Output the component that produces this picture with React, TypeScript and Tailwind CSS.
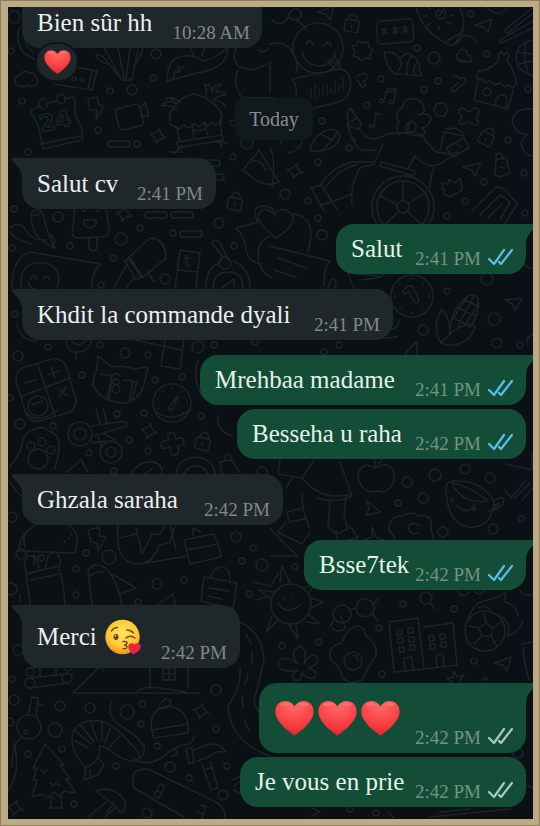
import React from "react";

type Side = "in" | "out";

const RINGS: [number, number, number][] = [
  [14, 17, 6], [11, 51, 3], [156, 54, 5], [153, 78, 3], [110, 91, 3], [132, 90, 5], [22, 101, 3], [98, 130, 3], [137, 144, 3], [28, 152, 3], [233, 157, 3], [233, 123, 3],
  [434, 58, 6], [417, 48, 3], [471, 14, 3], [487, 54, 3], [438, 81, 3], [424, 90, 3], [381, 79, 3], [367, 105, 3], [322, 121, 3], [508, 140, 3], [528, 89, 3], [318, 162, 3], [349, 148, 3], [285, 194, 5], [308, 201, 3], [484, 182, 3], [465, 201, 3], [524, 173, 3], [247, 143, 6],
  [14, 209, 3], [58, 217, 5], [70, 246, 3], [12, 248, 3], [121, 239, 6], [140, 228, 3], [113, 258, 3], [165, 279, 5], [173, 233, 3], [219, 223, 5], [234, 246, 3], [101, 285, 3], [15, 314, 3], [48, 347, 3], [18, 356, 5], [100, 345, 3], [125, 353, 5], [148, 355, 3], [198, 347, 6], [214, 345, 3], [255, 342, 3], [82, 375, 3], [155, 380, 3], [182, 377, 3], [10, 398, 3],
  [318, 218, 3], [322, 235, 5], [447, 216, 3], [525, 213, 3], [487, 279, 6], [447, 291, 3], [494, 319, 6], [423, 330, 5], [497, 343, 5], [520, 345, 3], [339, 345, 3], [324, 352, 3],
  [20, 424, 5], [53, 426, 3], [117, 414, 3], [144, 413, 3], [201, 416, 3], [129, 440, 3], [148, 451, 3], [89, 453, 3], [114, 471, 3], [12, 517, 5], [21, 554, 5], [41, 558, 3], [86, 553, 3], [109, 557, 7], [76, 569, 3], [236, 537, 5], [253, 548, 3], [242, 561, 3], [262, 565, 6], [157, 584, 5], [184, 580, 3], [76, 595, 3], [249, 594, 3], [138, 602, 3], [11, 589, 6], [262, 472, 5],
  [407, 482, 5], [435, 475, 6], [465, 469, 5], [490, 478, 5], [423, 498, 5], [398, 503, 3], [443, 532, 5], [493, 529, 5], [521, 519, 3], [295, 567, 3], [403, 604, 3], [454, 609, 3],
  [18, 650, 5], [12, 679, 3], [14, 700, 5], [60, 706, 5], [90, 708, 5], [127, 712, 7], [142, 704, 3], [141, 724, 3], [55, 730, 7], [216, 690, 5], [216, 729, 3], [157, 746, 3], [62, 749, 3], [28, 754, 3], [116, 766, 3], [170, 767, 5], [189, 778, 3], [227, 766, 3], [223, 795, 5], [74, 804, 3], [147, 813, 5], [10, 722, 4],
  [379, 628, 3], [282, 646, 3], [319, 642, 3], [382, 674, 3], [474, 661, 3], [518, 753, 5], [376, 813, 3], [350, 809, 3],
];

const SPARKS: [number, number][] = [[158, 136], [295, 171], [124, 214], [149, 431], [201, 711], [15, 808]];
const ARROWS: [number, number, number][] = [[484, 25, 0], [472, 168, 5], [513, 302, 15], [371, 508, 60], [503, 663, 0], [326, 12, 0]];
const LOCKS: [number, number, number][] = [[352, 24, 8], [487, 137, 30], [203, 442, 15], [235, 202, 10]];
const BARS: [number, number, number][] = [[108, 141, 22], [145, 212, 22], [171, 212, 22], [180, 231, 22], [206, 160, 14], [206, 174, 18]];

function Doodles() {
  return (
    <svg
      aria-hidden="true"
      className="absolute inset-0 h-full w-full text-[#1d2428]"
      viewBox="8 7 525 812"
      preserveAspectRatio="xMidYMid slice"
      fill="none"
      stroke="currentColor"
      strokeWidth="1.5"
      strokeLinecap="round"
      strokeLinejoin="round"
    >
      {RINGS.map(([x, y, r]) => <circle key={`${x}-${y}`} cx={x} cy={y} r={r} />)}
      {SPARKS.map(([x, y]) => <path key={`${x}-${y}`} transform={`translate(${x} ${y}) rotate(12)`} d="M0-8Q1-2 8 0Q1 2 0 8Q-1 2-8 0Q-1-2 0-8z" />)}
      {ARROWS.map(([x, y, a]) => <path key={`${x}-${y}`} transform={`translate(${x} ${y}) rotate(${a})`} d="M-9 0L8-6L4 8L0 2z" />)}
      {LOCKS.map(([x, y, a]) => (
        <g key={`${x}-${y}`} transform={`translate(${x} ${y}) rotate(${a})`}>
          <rect x="-7" y="-4" width="14" height="12" rx="2" />
          <path d="M-4-4v-3q4-6 8 0v3M0 1v3" />
        </g>
      ))}
      {BARS.map(([x, y, w]) => <rect key={`${x}-${y}`} x={x} y={y} width={w} height="6" rx="2.5" />)}

      {/* banana, cloud, banknote, tulips and fox tail */}
      <path d="M20 27q-6 14 4 26l12 7M25 30q-3 12 8 23" />
      <path d="M16 84q-4-8 4-9q3-6 9-2q7-1 6 4q5 3 1 8q-4 3-8 0q-7 4-12-1z" />
      <path d="M54 84l38 6 5-19-22-4M88 89l4-18" /><circle cx="74" cy="79" r="2" /><circle cx="82" cy="80" r="2" />
      <path d="M96 55q6-2 14 10l12 15h10l6-30M104 48l18 32M118 48l6 30M130 48l-4 31M143 48q-4 14-10 18M96 55q1 6 12 9" />
      <path d="M167 81q0-20 12-24q12-4 24 4q12-2 24-13M167 81l30-8q30-4 31-25M174 78v-6h6l-2-5h6M190 48l4 8M205 48l-3 8" />
      <path d="M236 48q-4 10 2 18q14 8 28-2M238 70q-6 14 4 28h34M258 50q8 4 10-2" />

      {/* calendar, lightning, camcorder */}
      <path d="M42 106l-9 3q-3 2-1 6q4 4 6 11M49 103l8-2M65 99l6-2q4 0 4 5v9q0 6 5 13q4 8 2 16l-39 9q-2-8-4-22M40 144l41-8" />
      <ellipse cx="43" cy="104" rx="4" ry="5" /><ellipse cx="61" cy="99" rx="4" ry="5" />
      <text x="41" y="132" transform="rotate(-12 41 132)" className="text-[23px] font-bold" fontFamily="DejaVu Sans, sans-serif" strokeWidth="1.2">24</text>
      <path d="M88 99l9-2 2 8 5 1-8 14 1-10-7 0z" />
      <rect x="117" y="106" width="25" height="22" rx="4" transform="rotate(-14 130 117)" /><path d="M140 109l5-7 4 15-8-2" />

      {/* beach hut */}
      <path d="M170 124q-2-10 4-16q6-12 20-14q14 3 22 12q8 8 5 15l-5 4-4-3-4 4-5-3-4 4-5-3-5 4-5-3-5 4zM176 126l4 16M220 120l2 16M177 142l45-7 1 5-45 8zM192 124l2 14M205 122l2 13M193 131l13-2M175 153l7-8M170 152h12M216 142l12 1M220 140l2 8" />
      <path d="M176 110q-6-6-14-4q6-8 14-2q-4-8-10-5q8-4 14 4M170 120q-2-8 2-10M206 97q2-10-2-12q8-2 8 7q2-8 9-8q-4 4-5 9q6-4 10 2q-8 0-13 5q8 0 12 6" />

      {/* smiley, voice bubble, keypad */}
      <circle cx="318" cy="48" r="25" />
      <path d="M306 45q3-8 7 0M324 46q5-8 7 0M302 51q2 14 18 15q12-1 16-15M329 61l5 8q5 1 6-4l-5-8M332 60l4 5" />
      <path d="M270 44q16-4 22 8q8 12 4 20M272 20q8 8 16-2q2-10 10-9q7 6 0 10q-8 2-10-4M296 20q8 4 10 10M270 92v-30" />
      <path d="M292 79l48-10q10 2 11 16q-2 14-12 17l-42 10M292 79q6 8 4 17" />
      <path strokeWidth="1.2" d="M307 90v5M311 88v10M315 85v13M319 89v6M323 86v9M327 84v12M331 87v6M335 80v14M339 84v8M343 78v12" />
      <rect x="377" y="20" width="36" height="23" rx="4" transform="rotate(-5 395 31)" />
      <path d="M382 29l5 5M382 34l5-5M384 28v7M393 28l5 5M393 33l5-5M395 27v7M403 27l5 5M403 32l5-5M405 26v7" />
      <path d="M352 46l5-1 1-4 5 2 5-1 1 5 4 3-3 5 0 4-5-1-4 3-3-4-5-1 2-5zM384 52q14-1 18 12q-4 8-6 11q-10-8-12-23zM401 58q6-8 11-2q5 0 5 6q4 1 2 6l3 8-24-2M412 56q-7 6-5 18M418 62q-6 6-4 12" />

      {/* hot air balloon, chopsticks, basketball */}
      <path d="M416 7q6 26 36 39q10-8 12-24q-2-8-4-15M447 41l17-10M452 46q8-4 12-12M464 36q8-2 12 6M439 15q4-2 3-4q-5-3-6 3q1 7 8 4q4-7-2-11M430 9l-3-2M427 16h-4M430 23l-3 3M439 26v3M447 22l3 2M450 15h4" />
      <path d="M486 7q8 8 16 6l6-6M505 30l27-22M508 33l24-19M500 40l33-19M501 43l32-15M505 30q0 3 3 3M500 40q-1 2 1 3" />
      <path d="M533 40q-16 3-17 17q0 14 17 19M517 52l16 2M518 64l15-3M526 43q-4 15 2 30" />

      {/* hermit house */}
      <path d="M477 79q-2-4 2-8q14-2 20-12q-2-5 2-7l3 3 3-3q4 3 0 8q10 16 9 24l-3 4-4-3-4 2-5-4-5 2-5-4-5 1-4-3zM478 81l-4 19 34 9 5-19M496 105v-6q6-8 11-1l-1 11" /><circle cx="487" cy="92" r="4" />

      {/* notes, cane, candy, poop */}
      <path d="M384 100l3-11h9l-2 12M384 100q-5-2-5 2q5 2 5-2M394 101q-5-2-5 2q5 2 5-2M387 92h8M374 126l2-13 5 2M374 126q-5-3-5 1q5 2 5-1" />
      <path d="M356 77q4-4 10-3q3 6-3 7l3 5-4 1-5-7M453 77q3-4 6 2q5-4 7 2l-12 11-3-3 8-7M458 60q-4-5 1-7l2-4q7 1 6 6q7 2 4 7zM458 60q7 4 13 1" />
      <polygon points="436,104 444,103 448,110 444,116 437,116 434,110" />
      <path d="M459 110q3-4 7 0q4 3 7-1q4-3 6 1q1 4-3 7q0 4 3 5q-2 6-6 2q-4-4-7-1q-6 4-7-2q4-4 2-6q-4-3-2-5z" />
      <path d="M533 109q-18-2-21 12q3 14 16 13q-11 8-4 17q4 5 9 5" />

      {/* woman with bouquet in a wheelchair */}
      <path d="M356 142q-10-12-8-20q-2-8 2-14l9 12q4 6-1 9l-7-2M359 128q8 14 20 10q14-8 30-4M348 122q4 24 14 28h14M356 118l-5 4M383 145l-9 18M399 134q-4-8 0-12q-6-10 4-15q0-8 8-8q8-2 12 6q4 8-4 10q10-4 12 4q-2 8-10 9q8 4 0 8q-8 0-13-4M412 120q-4 2-3 8M398 134q18-6 26 4q4 6 12 14l14 2 8-2M440 150l4-18 20 4M446 129l10-1 8 6M408 168l7-12 4 4q14 12 30-2M446 148l18-10 5 10-17 9zM434 168q-4 10-4 20M455 143l6 4" />
      <circle cx="411" cy="127" r="5" /><circle cx="403" cy="207" r="31" /><circle cx="403" cy="207" r="26" /><circle cx="403" cy="207" r="6" />
      <path d="M403 201v-20M408 204l18-12M407 211l15 14M399 211l-14 14M397 205l-18-10M380 166l34 10 1-5-34-9zM320 186q10-18 32-24h22M325 188q14-20 32-23M311 188l10-3 16 24M311 188l14 24M352 204q-2-20 8-36l14-4M320 206l32-12" />
      <path d="M310 150q4-16 18-20q10-2 12 6q-2 12-16 14q-8 3-14 0zM322 135l10 5 6-8M332 140l-8 9" />
      <path d="M270 140q10-4 12 4M270 148q6 8 2 40M288 152q8 2 14-10M243 170l16-20 20 32q-16 8-36-12M252 162q8-4 14 8" />
      <path d="M496 160l10-2 4 15-10 4-5-2zM497 160q-3-6 2-7q5 1 3 6M500 167l4 1M442 183l6 1 1-5 6 4 5-5q3 7 1 13l-6 3-5 3-6-3q2-5-3-5 3-2 1-6z" />
      <path d="M472 211l24-24q8 0 12 6t10 10l-14 22M480 215l20-20q8 4 10 8l-10 16M488 218l14-14" />

      {/* peppers and popsicle */}
      <path d="M33 211q8-4 11 6q2 14 11 31q-22-8-24-30q0-5 2-7zM32 216q6-3 8 0M10 228q8-8 16 2q4 10 20 10M10 232q8 10 22 12M50 234l5 6-3 8M75 208l-3 26q2 4 6 4l22-1q10 0 9-7l-3-22M89 238v10q4 6 8 0v-10M84 220h12v4q-6 8-12 0zM82 211h4M96 211h4" />
      {/* note with smiling face */}
      <path d="M12 288q0-30 18-36l71 12q-10 8-9 24M21 280q1-17 19-17t19 17l-2 8M21 280v8M31 279q3-7 6 0M43 280q3-7 7 0M28 282q4 10 13 8" />
      {/* torch, box, compass, bird */}
      <path d="M128 258l22-20q14 0 16 20l-24 20zM125 261l5-3 12 18-6 4zM126 266l-12 22M134 278l-8 10M158 240q6 2 8 14M148 270q2 10 8 12M180 250l20 3-4 35M180 250l-5 38M178 270l20 2" />
      <text x="184" y="267" className="text-[16px]" fontFamily="DejaVu Serif, serif" strokeWidth="0.8">t</text>
      <path d="M206 288q0-20 12-24l5-7M234 261q16 8 16 27M213 288q0-16 15-16t15 16M224 258l-12-15q2-5 8-1l8 18M222 288l12-9v8" /><circle cx="225" cy="263" r="6" />
      <path d="M236 228l22-6q-8-14 4-16q12 0 14 10M236 228q10 10 10 22q4 14 16 14M270 236q-12 4-12 20q0 14 14 22" />

      {/* heart card, envelope */}
      <path d="M276 238q-18-14-18-22q4-12 16-2q10-10 19 2q2 10-17 22M294 214q16 2 17 20q-1 10-3 18M270 246l60 15q-6 6-6 24M278 258l28 10M274 270l22 7M328 288q4-14 8-6l-2 14" />
      <path d="M348 274l6 14M356 274l26 2 6-6M362 280l20-3" />
      <circle cx="412" cy="296" r="21" /><circle cx="412" cy="296" r="17" strokeDasharray="1 12" /><path d="M403 290l6-4q4-1 5 3l5 11q-2 5-5 1l-5-9-5 2z" />

      {/* corn */}
      <path d="M441 343q-10-16 1-34q8 8 8 25M441 343q10 4 20 0q12-4 14-18q-14-3-26 10zM450 328q2-20 18-32q8-4 10 4q2 14-8 27M453 318l16 8M458 308l18 8M464 300l14 6M474 296l-16 30M468 296l-16 24M479 303l-14 22" />
      <path d="M533 268q-10 0-14-12M533 334q-8 4-6 10M385 330q14 0 14-10M370 336q20 4 28 0 M404 356q8-12 13-14v12" />

      {/* calculator, cat, stopwatch */}
      <rect x="20" y="362" width="52" height="56" rx="12" transform="rotate(-17 46 390)" />
      <path d="M38 365l17 51M22 396l48-18M48 375l11-4M51 367l4 11M25 383l13-4M58 388l9 8M66 387l-7 10" /><circle cx="38" cy="406" r="10" /><path d="M32 405l11-4" />
      <path d="M98 356l14 11q10-2 22 2l14-2q-2 8-4 18q-6 18-22 18q-22-2-29-18q0-8 4-16zM101 374l11 2-5 22M112 376l-3 24M123 380l14 2-5 18M133 382l-4 20M112 376q4-5 9 0" /><circle cx="116" cy="382" r="3" /><circle cx="116" cy="389" r="4" />
      <circle cx="172" cy="403" r="19" /><circle cx="172" cy="403" r="15" strokeDasharray="1 9" /><path d="M168 408l10-12-5 13q-3 3-5-1zM66 342q2 12 12 10q12 0 14-14M72 341q6 8 14-1M76 353v6M165 340l-4 26 19 3 4-30M126 338l55 12" />
      <path d="M198 360q-6 18 4 36M17 325q4 16 20 16" />

      {/* paw, scissors, plus */}
      <path d="M10 466q12-14 13-26q4-10 12-11q8-4 14 2q12 4 10 20l-4 18" /><circle cx="38" cy="459" r="10" /><circle cx="31" cy="446" r="4" /><circle cx="42" cy="442" r="4" /><circle cx="51" cy="450" r="4" />
      <path d="M26 412q10 14 32-2M154 410q16 14 36 0M218 416q-2 14 14 20M92 426l26-4q10-2 8 4l-32 10M92 443l14-2M96 408l4 16M103 408l4 16M98 437l4 10M104 434l12 6" /><circle cx="80" cy="434" r="12" /><circle cx="80" cy="434" r="6" /><circle cx="111" cy="452" r="11" /><circle cx="111" cy="452" r="5" />
      <path d="M170 433q5-2 6 6q8-3 8 3q0 4-7 4q4 8-3 9q-4 1-4-8q-9 4-9-2q0-5 8-5q-3-6 1-7z" />
      <path d="M66 473l15-13 7 12M130 474q10-14 24-12q10 4 8 12M145 474l8-6M176 474q2-16 20-17q18 2 19 17M184 474q4-8 12-8t12 8M222 474l-2-12 12-2 8 13M225 460q-2-5 3-6q5 2 3 6M10 482q4 8 12 14" />

      {/* taco, bolt, kneeling figure, cake */}
      <path d="M36 525q-18 10-17 26l56 2q6-20-6-28M36 525q-16 8-11 22M71 534l1 1M68 538l1 1M64 541l1 1M88 530l12-3-1 9 7 1-8 14-1-8-6-1z" />
      <path d="M118 525q-4 38 20 39q14 0 20-16M136 528l6 26 10-20 8 0 6-10M119 538l17-4M158 546l12-4 4-14M140 564l48-8M184 540l28-6q5 1 9 23l-31 7zM187 550l31-6M193 536v-8l8 4M170 524l6 26" />
      <path d="M26 574l32-8q6 16 7 40M26 574l5 34M31 580l28-6M26 572l-2-8 4-8h7l4 12M46 568q0-16 10-16q6 6 4 14M34 556v8" />
      <path d="M88 570q8-10 20 0q10 14 14 34M88 570l4 36M90 576q8-6 14-4M112 574l24 14-16 6M155 606l18-12 2 12M20 602v-8" />
      <path d="M204 577l33 6-4 26-32-8zM211 578q2-12 12-11q8 2 7 13M209 588l20 3M208 596l14 3M254 582l16 4 8-12M256 600l14-4" />

      {/* girl and shoes */}
      <path d="M280 460l-2 14 24 4 12-18M302 478q20 24 50 16M292 478l-6 10M340 462l12 34q-16 8-34 2M302 494l1 14-16 4 2 10 18-4M303 508l6 20M286 522l-8 10 24 12 8-12M330 500l-2 26 8 8 12-5-4-14 2-18M336 530l2 12 20-4-8-12M270 528q12 14 28 28M270 556h28M280 484v30" />
      {/* apple, cup, check marks, fried egg */}
      <path d="M376 468q-16-8-18 8q2 14 14 16l6-1 6 1q12-6 10-20q-6-12-18-4zM376 468l-2-10M378 464l6-6" />
      <path d="M446 486q2-6 12-5q24 0 36 20q-2 28-26 26q-22-4-22-41zM452 483q16 2 36 18q-26 4-36-18M494 501q8-6 10-2q-2 12-16 12M494 506l5-3q-1 5-6 6M457 505q10 12 18-1" /><circle cx="452" cy="500" r="1.5" /><circle cx="474" cy="509" r="1.5" />
      <path d="M505 490l6 8 15-18M514 499l16-16M522 500l11-12M506 464l26 6v-16" />
      <path d="M389 530q0-14 14-14q8-6 16 0q14-2 12 12l2 10M389 530l6 8M420 526q-8-6-12 1q2 9 10 6M364 540l8-3v-10l4 10 8 3" />

      {/* sun, glasses, magnifier, shark */}
      <circle cx="291" cy="604" r="20" />
      <path d="M284 598v1M292 597v1M279 604q7 12 21 1M280 582l2-16 8 17M303 588l13-4-8 10M311 598l12 4-12 6M308 614l12 10-14-2M296 625l2 14-9-14M278 620l-12 12 6-16M270 598l-12-8 16 2" />
      <circle cx="342" cy="614" r="9" /><circle cx="365" cy="608" r="9" /><path d="M350 610l6-2M374 604l4-6M334 620l-4 6M373 614l4 6" />
      <circle cx="426" cy="598" r="6" /><path d="M430 603l5 6M458 590q2 10 12 2M474 590q4 8 10 0M468 620q4-18 20-20q14-4 18-8l-2 10q12 2 14 14M520 590q4 8 13 4M478 608q8-4 12 2" />
      <circle cx="485" cy="631" r="20" /><path d="M479 628l7-5 7 5-2 8h-9zM486 623l-2-10M493 628l8-6M491 636l6 10M482 636l-8 8M479 628l-10-2M501 616q12 10 6 20q10-2 16-14" />

      {/* butterfly, egg, buildings, pot */}
      <path d="M298 670q-20 4-20-8q6-8 20 2q-10-12 2-18q8 4 4 18q8-14 14-6q0 8-10 10q12 4 6 10q-8 2-12-6q0 10-8 8q-4-6 4-10M340 616l6 12q-8 6-14 0" />
      <path d="M356 626q8-1 10 10q12 8 10 20q-10 14-14 24q-12 6-20-3q-2-12-12-18q-2-14 12-16q4-14 14-17z" /><circle cx="353" cy="661" r="9" /><path d="M353 655q5 1 5 6" />
      <path d="M389 622l29-4 6 51-30 3zM423 627l30-4 4 42-33 4M405 670l-1-12 8-1 1 12M437 667l-1-12 7-1 1 12" />
      <path d="M397 630h5v5h-5zM408 628h5v5h-5zM398 638h5v5h-5zM409 637h5v5h-5zM399 647h5v5h-5zM410 645h5v5h-5zM429 636h5v5h-5zM440 634h5v5h-5zM430 644h5v5h-5zM441 642h5v5h-5z" />
      <path d="M447 678l6 0 1-7 3 6 7-2-4 6 3 7-7-3-6 2 2-5zM522 644l11-2M523 648q2 20 6 32M482 680l3-2 3 2" />

      {/* logs, cottage, road */}
      <path d="M28 668l38-4M30 678l36-4M30 688l38-5M40 668v8M56 666v8" /><circle cx="30" cy="672" r="4" /><circle cx="30" cy="683" r="5" /><circle cx="67" cy="678" r="5" /><circle cx="68" cy="667" r="4" />
      <path d="M98 668l-25 25h126M150 668v20M188 668v20M163 668h12v12h-12zM169 668v12M163 674h12M136 693q6-8 22-5q20 2 28 4M100 668l4 3" />
      <path d="M240 622q22 10 24 38q-4 20-10 40q4 18 18 22M240 668q2 18-12 38q2 36 42 50M246 634l5 10M252 652v12M248 674l-3 11M242 696l1 11M244 720l5 11" />

      {/* key, pine tree, shrimp */}
      <circle cx="29" cy="727" r="12" /><circle cx="26" cy="732" r="2" /><path d="M28 715l4-18 6 1-2 19M38 704l4 1M22 737l-8 8q4 14 2 26q-3 14-8 20M16 745q-5 10-4 22" />
      <path d="M45 744l-12 24h4l-4 12h4l-5 17 10-3 6 4 6-6 6 5 4-6 12 2-10-14h4l-10-14h4zM52 797l-2 11h12l-1-13M41 770l3 3 3-3M50 783l3 3 3-3 4 3" />
      <path d="M86 768q-18-20-13-36q8-14 27-11q14 3 32 24q12 12 4 16q-10 2-28-12M84 768q14-4 16-18q-4-8 8-1M74 740l14 8M74 730l17 14M80 724l14 18M90 720l7 20M102 722l0 18M110 728l-5 14M120 736l-12 13M86 768l-2 12 14-5 6-10-6-8M90 778v-8M112 702q-6 12 6 22q20 12 26 22q2 12-10 14M134 760q14 6 28-2q12-12 26-14q6-2 6-8" />
      <path d="M152 732q-4-22 14-26q18 0 22 18l1 6M152 730l36-6v9l-34 5zM160 708q-2-6 4-7l1-3 3 2 3 1-1 4q-4 5-10 3" />

      {/* hammer, mushroom, snowboard */}
      <path d="M186 749l6-1 2 14-5 2zM194 750l10-4q14-6 22 6q-10-2-16 4l-12 5M202 764l9 26 7-2-8-27M204 770l9-3M168 752q8-6 10 2l-6 2" />
      <path d="M96 791q18-6 29 10q2 10-4 12q-8-10-25-22M108 801l-20 16M118 806l-14 11M114 802q-2 6-8 10" />
      <path d="M134 788q-6-20 14-19l66 32q14 8 10 18M134 788q20 12 50 29M160 784l5 2-6 12-5-2zM157 791l5 2M201 805l5 2-4 12M197 812l6 2" />
      <path d="M232 780q10-6 10 0l-8 6M234 790l8 4M526 770q-10 14 8 18M312 816l8-5M320 812l-8-4M430 817l80-8M440 812l30-3M388 812l6 6" />
    </svg>
  );
}

function Heart({ id, className }: { id: string; className: string }) {
  return (
    <svg viewBox="0 0 40 36" className={className} role="img" aria-label="❤️">
      <defs>
        <radialGradient id={id} cx="0.5" cy="0.12" r="0.95">
          <stop offset="0" stopColor="#ff6a68" />
          <stop offset="0.5" stopColor="#fb4648" />
          <stop offset="1" stopColor="#e01f2e" />
        </radialGradient>
      </defs>
      <path fill={`url(#${id})`} d="M20 36C16 33 1 23 0.4 12C0.2 5 4.500 0.500 10.500 0.500C15 0.500 18.500 3 20 6.500C21.500 3 25 0.500 29.500 0.500C35.500 0.500 39.800 5 39.600 12C39 23 24 33 20 36z" />
      <ellipse cx="10" cy="4" rx="5" ry="2" fill="#ff9b96" opacity="0.35" />
      <ellipse cx="30" cy="4" rx="5" ry="2" fill="#ff9b96" opacity="0.35" />
    </svg>
  );
}

function KissFace() {
  return (
    <svg viewBox="0 0 36 36" className="size-9 shrink-0" role="img" aria-label="😘">
      <defs>
        <radialGradient id="kiss-skin" cx="0.5" cy="0.38" r="0.62">
          <stop offset="0" stopColor="#ffe65c" />
          <stop offset="0.65" stopColor="#fdc93a" />
          <stop offset="1" stopColor="#ef9420" />
        </radialGradient>
      </defs>
      <circle cx="17.500" cy="18" r="17.200" fill="url(#kiss-skin)" />
      <ellipse cx="11" cy="18" rx="2.500" ry="3" fill="#6b3f0c" />
      <circle cx="10.500" cy="16.800" r="0.800" fill="#fff" />
      <g fill="none" stroke="#7a4a10" strokeLinecap="round" strokeWidth="1.500">
        <path d="M6.500 12q2-3.500 6-3.500M22 11q4 0 6.500 3M21 19q4-3.500 9 0" />
        <path d="M18 22.500q4.500-.5 4 2q-.5 1.500-3 1.700q3.500 .3 3 2.300q-.8 1.700-4 1.200" />
      </g>
      <path d="M28 35.500C25 32 22.500 29.500 23.500 26.500C24.500 23.500 28.500 23.800 29.500 25.700C31.500 23.300 35.500 24 35.800 27.300C36 31 32 33.500 28 35.500z" fill="#e5263f" />
    </svg>
  );
}

function Ticks({ read }: { read: boolean }) {
  return (
    <svg
      viewBox="0 0 26 18"
      className={`mb-2 h-[18px] w-[26px] shrink-0 self-end ${read ? "text-[#5cbde6]" : "text-[#a9c9b9]"}`}
      fill="none"
      stroke="currentColor"
      strokeWidth="2.2"
      strokeLinecap="round"
      strokeLinejoin="round"
      role="img"
      aria-label={read ? "Read" : "Delivered"}
    >
      <path d="M2 11l5 5L17 2M12 14l2 2L25 2" />
    </svg>
  );
}

function Tail({ side }: { side: Side }) {
  return side === "in" ? (
    <svg viewBox="0 0 28 20" className="absolute top-0 -left-[11px] h-5 w-7 text-[#1f272a]" aria-hidden="true">
      <path fill="currentColor" d="M2 0H28V20H11Q11 14 7 9L1 2.500Q0 0 2 0z" />
    </svg>
  ) : (
    <svg viewBox="0 0 28 20" className="absolute top-0 -right-[11px] h-5 w-7 text-[#144d37]" aria-hidden="true">
      <path fill="currentColor" d="M26 0H0V20H17Q17 14 21 9L27 2.500Q28 0 26 0z" />
    </svg>
  );
}

type BubbleProps = {
  side: Side;
  time: string;
  size: string;
  tail?: boolean;
  read?: boolean;
  children: React.ReactNode;
};

function Bubble({ side, time, size, tail = true, read = true, children }: BubbleProps) {
  const incoming = side === "in";
  return (
    <li className={`flex ${incoming ? "justify-start" : "justify-end"}`}>
      <div
        className={`relative flex items-center justify-between gap-1 rounded-[18px] pr-[13px] pl-[15px] ${size} ${
          incoming ? "bg-[#1f272a] leading-[51px] text-[#eceff0]" : "bg-[#144d37] leading-[50px] text-[#e3f3e8]"
        }`}
      >
        {tail && <Tail side={side} />}
        <div className="relative flex items-center text-[25px] whitespace-nowrap">{children}</div>
        <div className="relative flex items-end gap-1.5 self-end">
          <time className={`mb-[3px] text-[19px] leading-6 whitespace-nowrap ${incoming ? "text-[#7f878b]" : "text-[#739482]"}`}>{time}</time>
          {!incoming && <Ticks read={read} />}
        </div>
      </div>
    </li>
  );
}

export default function App() {
  return (
    <main className="border-y-[7px] border-r-[7px] border-l-8 border-[#bca986] bg-[#0a1014] font-['Baskerville','Liberation_Serif',serif] outline-1 -outline-offset-1 outline-[#8d7c60]">
      <div className="relative overflow-hidden pr-[7px] pb-3 pl-[14px]">
        <Doodles />
        <ul className="relative flex flex-col">
          <li className="flex flex-col items-start">
            <div className="flex h-[41px] w-60 items-end justify-between rounded-b-[18px] bg-[#1f272a] pr-3 pl-[15px] text-[#eceff0]">
              <span className="text-[25px] leading-[50px] whitespace-nowrap">Bien sûr hh</span>
              <time className="mb-[3px] text-[19px] leading-6 whitespace-nowrap text-[#7f878b]">10:28 AM</time>
            </div>
            <span className="relative -mt-1.5 ml-[13px] flex h-10 w-11 items-center justify-center rounded-full border-2 border-[#0d1418] bg-[#1f272a]">
              <Heart id="heart-reaction" className="h-6 w-[27px]" />
            </span>
          </li>
          <li className="mt-4 flex justify-center">
            <span className="rounded-[10px] bg-[#11191d] px-[14px] text-[20px] leading-[42px] text-[#858d91]">Today</span>
          </li>
          <li className="mt-[18px]">
            <ul className="flex flex-col gap-[15px]">
              <Bubble side="in" time="2:41 PM" size="w-[194px]">Salut cv</Bubble>
              <Bubble side="out" time="2:41 PM" size="w-[190px]">Salut</Bubble>
              <Bubble side="in" time="2:41 PM" size="w-[371px]">Khdit la commande dyali</Bubble>
              <li>
                <ul className="flex flex-col gap-1">
                  <Bubble side="out" time="2:41 PM" size="w-[326px]">Mrehbaa madame</Bubble>
                  <Bubble side="out" time="2:42 PM" size="w-[289px]" tail={false}>Besseha u raha</Bubble>
                </ul>
              </li>
              <Bubble side="in" time="2:42 PM" size="w-[261px]">Ghzala saraha</Bubble>
              <Bubble side="out" time="2:42 PM" size="w-[222px]">Bsse7tek</Bubble>
              <Bubble side="in" time="2:42 PM" size="h-[63px] w-[218px]">
                <span className="mr-2">Merci</span>
                <KissFace />
              </Bubble>
              <li>
                <ul className="flex flex-col gap-1">
                  <Bubble side="out" time="2:42 PM" size="h-[70px] w-[267px]" read={false}>
                    <span className="flex gap-1 pl-px">
                      <Heart id="heart-a" className="h-9 w-[39px]" />
                      <Heart id="heart-b" className="h-9 w-[39px]" />
                      <Heart id="heart-c" className="h-9 w-[39px]" />
                    </span>
                  </Bubble>
                  <Bubble side="out" time="2:42 PM" size="w-[286px]" tail={false} read={false}>Je vous en prie</Bubble>
                </ul>
              </li>
            </ul>
          </li>
        </ul>
      </div>
    </main>
  );
}
